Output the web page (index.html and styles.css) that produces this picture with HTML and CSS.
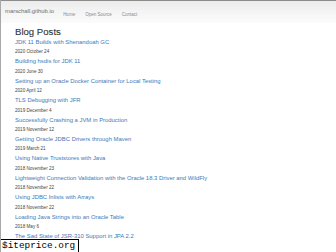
FILE: index.html
```html
<!DOCTYPE html>
<html>
<head>
<meta charset="utf-8">
<link rel="stylesheet" href="styles.css">
</head>
<body>
<nav class="navbar">
  <a class="brand" href="#">marschall.github.io</a>
  <ul class="nav">
    <li><a href="#">Home</a></li>
    <li><a href="#">Open Source</a></li>
    <li><a href="#">Contact</a></li>
  </ul>
</nav>
<main class="container">
  <h1 class="title">Blog Posts</h1>
  <ul class="posts">
    <li><a href="#">JDK 11 Builds with Shenandoah GC</a><span class="date">2020 October 24</span></li>
    <li><a href="#">Building hsdis for JDK 11</a><span class="date">2020 June 30</span></li>
    <li><a href="#">Setting up an Oracle Docker Container for Local Testing</a><span class="date">2020 April 12</span></li>
    <li><a href="#">TLS Debugging with JFR</a><span class="date">2019 December 4</span></li>
    <li><a href="#">Successfully Crashing a JVM in Production</a><span class="date">2019 November 12</span></li>
    <li><a href="#">Getting Oracle JDBC Drivers through Maven</a><span class="date">2019 March 21</span></li>
    <li><a href="#">Using Native Truststores with Java</a><span class="date">2018 November 23</span></li>
    <li><a href="#">Lightweight Connection Validation with the Oracle 18.3 Driver and WildFly</a><span class="date">2018 November 22</span></li>
    <li><a href="#">Using JDBC Inlists with Arrays</a><span class="date">2018 November 22</span></li>
    <li><a href="#">Loading Java Strings into an Oracle Table</a><span class="date">2018 May 6</span></li>
    <li><a href="#">The Sad State of JSR-310 Support in JPA 2.2</a><span class="date">2018 April 2</span></li>
  </ul>
</main>
<div class="watermark">$iteprice.org</div>
</body>
</html>
```
FILE: styles.css
```css
html, body {
  margin: 0;
  padding: 0;
  height: 100%;
  overflow: hidden;
}
body {
  font-family: "Liberation Sans", Arial, sans-serif;
  background: #fff;
  border-left: 1px solid #a8a8a8;
  box-sizing: border-box;
  position: relative;
}
a { text-decoration: none; }
.navbar {
  display: flex;
  align-items: center;
  height: 22px;
  border-top: 1px solid #8c8c8c;
  background: linear-gradient(to bottom, #ececec 0%, #f6f6f6 60%, #fbfbfb 100%);
  padding-left: 4px;
}
.brand {
  color: #6f6f6f;
  font-size: 5.9px;
  margin-top: -3px;
}
.nav {
  display: flex;
  list-style: none;
  margin: -3px 0 0 9px;
  padding: 0;
}
.nav li a {
  color: #8a8a8a;
  font-size: 4.5px;
  margin-right: 10px;
}
.container {
  padding-left: 14px;
}
.title {
  margin: 3px 0 0;
  font-size: 9.6px;
  line-height: 12px;
  font-weight: normal;
  color: #333;
  -webkit-text-stroke: 0.1px #333;
}
.posts {
  list-style: none;
  margin: 0;
  padding: 0;
}
.posts li {
  display: flex;
  flex-direction: column;
}
.posts a {
  color: #4279b8;
  font-size: 5.9px;
  line-height: 9.4px;
  white-space: nowrap;
}
.date {
  color: #444;
  font-size: 4.6px;
  line-height: 10px;
}
.watermark {
  position: absolute;
  left: 0;
  bottom: 0;
  background: #fff;
  border-top: 1px solid #000;
  border-right: 1px solid #000;
  font-family: "Liberation Mono", monospace;
  font-size: 9.4px;
  line-height: 12px;
  padding: 0 3px 0 1px;
  color: #000;
}
```
